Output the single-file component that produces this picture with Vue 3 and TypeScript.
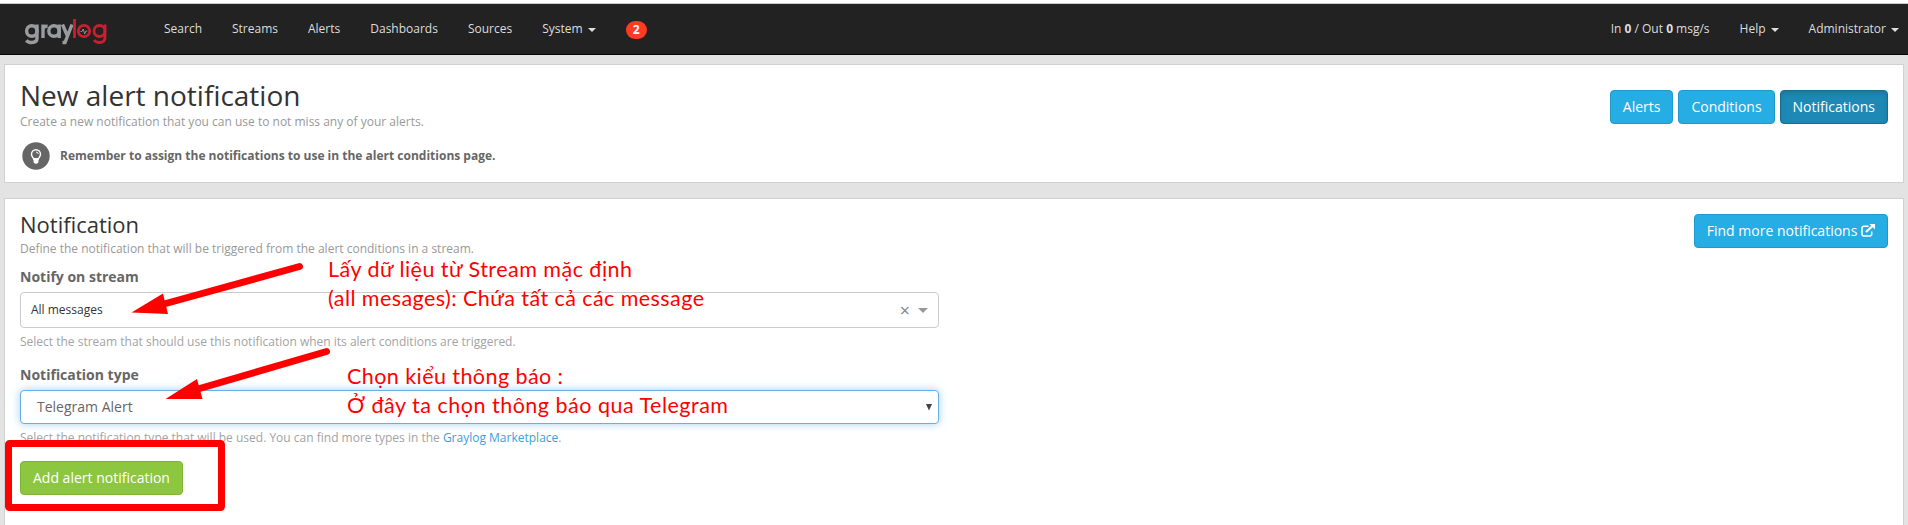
<script setup lang="ts">
interface NavItem { label: string; caret?: boolean }
interface Note { text: string; x: number; y: number; width: number }

const navItems: NavItem[] = [
  { label: 'Search' },
  { label: 'Streams' },
  { label: 'Alerts' },
  { label: 'Dashboards' },
  { label: 'Sources' },
  { label: 'System', caret: true },
]
const sections = ['Alerts', 'Conditions', 'Notifications']
const active = 'Notifications'

const notes: Note[] = [
  { text: 'Lấy dữ liệu từ Stream mặc định', x: 328, y: 276.500, width: 304 },
  { text: '(all mesages): Chứa tất cả các message', x: 328, y: 305.500, width: 376 },
  { text: 'Chọn kiểu thông báo :', x: 347, y: 383.500, width: 216 },
  { text: 'Ở đây ta chọn thông báo qua Telegram', x: 347, y: 412.500, width: 381 },
]
</script>

<template>
  <div class="page">
    <header class="navbar">
      <svg class="logo" width="86" height="32" viewBox="0 0 86 32" fill="none" stroke-width="2.800">
        <g stroke="#9a9b9d" stroke-width="3.400">
          <circle cx="7.800" cy="13" r="5.200" />
          <path d="M13 6.500v13.500q0 4.500-5.200 4.500q-3.700 0-5.500-2.200" />
          <path d="M19 20v-13.500M19 12.500q0-4.600 4.600-4.300" />
          <circle cx="30" cy="13" r="5.200" />
          <path d="M35.200 6.500v13.500" />
          <path d="M38.500 6.500l5.200 12M48 6.500l-7 18h-2.500" />
        </g>
        <g stroke="#c9202f">
          <path d="M50.500 1v19" />
          <circle cx="60" cy="13" r="5.700" />
          <circle cx="75.500" cy="13" r="5.500" />
          <path d="M81 6.500v13q0 5-5.500 5q-3.700 0-5.300-2.500" />
        </g>
        <path d="M56.500 13.500h1.500l1.200-2.500 1.500 5 1.200-3h1.500" stroke="#aaa" stroke-width=".8" />
      </svg>
      <nav class="links">
        <a v-for="item in navItems" :key="item.label">{{ item.label }}<i v-if="item.caret" class="caret"></i></a>
      </nav>
      <span class="badge">2</span>
      <nav class="links right">
        <a>In <b>0</b> / Out <b>0</b> msg/s</a>
        <a>Help<i class="caret"></i></a>
        <a>Administrator<i class="caret"></i></a>
      </nav>
    </header>

    <section class="box intro">
      <div>
        <h1>New alert notification</h1>
        <p class="description">Create a new notification that you can use to not miss any of your alerts.</p>
        <p class="tip">
          <svg width="28" height="28" viewBox="0 0 28 28">
            <circle cx="14" cy="14" r="13.700" fill="#666" />
            <path d="M11.800 17.500c-.2-2-2.300-2.700-2.300-5.300a4.500 4.500 0 0 1 9 0c0 2.600-2.100 3.300-2.300 5.300z" fill="#666" stroke="#fff" stroke-width="1.400" />
            <path d="M11.600 16h4.800v4.500q-2.400 2.500-4.800 0z" fill="#fff" />
            <path d="M14 10q2 0 2.200 2" fill="none" stroke="#fff" />
          </svg>
          <strong>Remember to assign the notifications to use in the alert conditions page.</strong>
        </p>
      </div>
      <div class="buttons">
        <button v-for="name in sections" :key="name" class="btn" :class="{ active: name === active }">{{ name }}</button>
      </div>
    </section>

    <section class="box form">
      <div class="fields">
        <h2>Notification</h2>
        <p class="description">Define the notification that will be triggered from the alert conditions in a stream.</p>
        <label>Notify on stream</label>
        <div class="select stream">
          <span>All messages</span>
          <span class="clear">×</span>
          <i class="caret big"></i>
        </div>
        <p class="help">Select the stream that should use this notification when its alert conditions are triggered.</p>
        <label class="second">Notification type</label>
        <div class="select type">
          <span>Telegram Alert</span>
          <svg width="6" height="7" viewBox="0 0 6 7"><path d="M0 0h6L3 6.500z" fill="#444" /></svg>
        </div>
        <p class="help">Select the notification type that will be used. You can find more types in the <a>Graylog Marketplace</a>.</p>
        <button class="btn add">Add alert notification</button>
      </div>
      <button class="btn find">Find more notifications
        <svg width="14" height="13" viewBox="0 0 14 13" fill="none" stroke="#fff">
          <path d="M7.500 2.300H3Q1 2.300 1 4.300v5.700q0 2 2 2h5.700q2 0 2-2V7.500" stroke-width="1.500" />
          <path d="M5 8L11.500 2" stroke-width="2.200" />
          <path d="M8.500 0H14v5.500z" fill="#fff" stroke="none" />
        </svg>
      </button>
    </section>

    <svg class="markup" width="1908" height="525" viewBox="0 0 1908 525">
      <g stroke="#f00" stroke-width="7" stroke-linecap="round">
        <path d="M299.500 266.500L164 304" />
        <path d="M326.500 351.500L198 389" />
      </g>
      <path d="M131.500 312.500L163 293.500L168 314z" fill="#f00" />
      <path d="M165.500 399L197 379L202.500 399z" fill="#f00" />
      <rect x="8.500" y="443.500" width="213" height="64" rx="1" fill="none" stroke="#f00" stroke-width="7" />
      <text v-for="note in notes" :key="note.text" :x="note.x" :y="note.y" :textLength="note.width">{{ note.text }}</text>
    </svg>
  </div>
</template>

<style>
html, body { margin: 0; background: #e3e3e3; overflow: hidden; }
</style>

<style scoped>
* { box-sizing: border-box; }
.page { position: relative; height: 525px; overflow: hidden; border-top: 3px solid #fff; font: 12px/18px "Open Sans", "Noto Sans", sans-serif; color: #333; }
h1, h2, p { margin: 0; }
.navbar { display: flex; height: 52px; background: #222; border-top: 1px solid #ccc; border-bottom: 1px solid #080808; }
.logo { margin: 14px 0 0 24px; }
.links { display: flex; margin-left: 39px; }
.links a { padding: 16px 15px 0; color: #ddd; white-space: pre; }
.links.right { margin-left: auto; margin-right: -6px; }
.caret { display: inline-block; margin-left: 5px; vertical-align: 1px; border: 4px solid transparent; border-top-color: currentColor; border-bottom: 0; }
.badge { margin: 17px 0 0 15px; width: 21px; height: 18px; border-radius: 9px; background: #ff3b22; color: #fff; font-weight: 700; text-align: center; line-height: 18px; }
.box { display: flex; justify-content: space-between; align-items: flex-start; margin: 9px 4px 0; padding: 0 15px; background: #fff; border: 1px solid #d1d1d1; }
.intro { height: 119px; }
h1 { margin-top: 12px; margin-bottom: 1px; font-size: 28px; line-height: 36px; font-weight: 400; color: #333; }
.description { color: #999; line-height: 16px; }
.tip { display: flex; align-items: center; gap: 10px; margin: 12px 0 0 2px; color: #666; }
.buttons { display: flex; gap: 5px; margin-top: 25px; }
.btn { height: 34px; padding: 0 12px; border: 1px solid #1f99cb; border-radius: 4px; background: #26ade4; color: #fff; font: 14px/20px "Open Sans", "Noto Sans", sans-serif; white-space: nowrap; }
.btn.active { background: #1e89b5; border-color: #186e91; box-shadow: inset 0 3px 5px rgba(0, 0, 0, .125); }
.form { margin-top: 15px; height: 340px; }
.fields { width: 919px; }
h2 { margin-top: 12px; font-size: 22px; line-height: 26px; font-weight: 400; color: #333; }
.form .description { margin-top: 4px; }
label { display: block; height: 20px; margin-top: 10px; font-size: 14px; font-weight: 700; line-height: 20px; color: #666; }
label.second { margin-top: 14px; }
.select { display: flex; align-items: center; border: 1px solid #ccc; border-radius: 4px; background: #fff; margin-top: 5px; }
.stream { height: 36px; padding: 0 10px; }
.clear { margin-left: auto; font-size: 18px; color: #888; }
.caret.big { border-width: 5px 5px 0; color: #999; margin-left: 8px; }
.type { height: 34px; padding: 0 6px 0 16px; justify-content: space-between; border-color: #66afe9; box-shadow: 0 0 8px rgba(102, 175, 233, .6); font-size: 14px; color: #666; }
.help { margin-top: 5px; color: #a3a3a3; }
.help a { color: #3ba0dc; }
.add { margin-top: 14px; background: #8dc63f; border-color: #7fb536; }
.find { margin-top: 15px; }
.find svg { vertical-align: -1px; }
.markup { position: absolute; left: 0; top: -3px; pointer-events: none; }
.markup text { font: 21.500px Lato, "Open Sans", "Noto Sans", sans-serif; fill: #f00; }
</style>
